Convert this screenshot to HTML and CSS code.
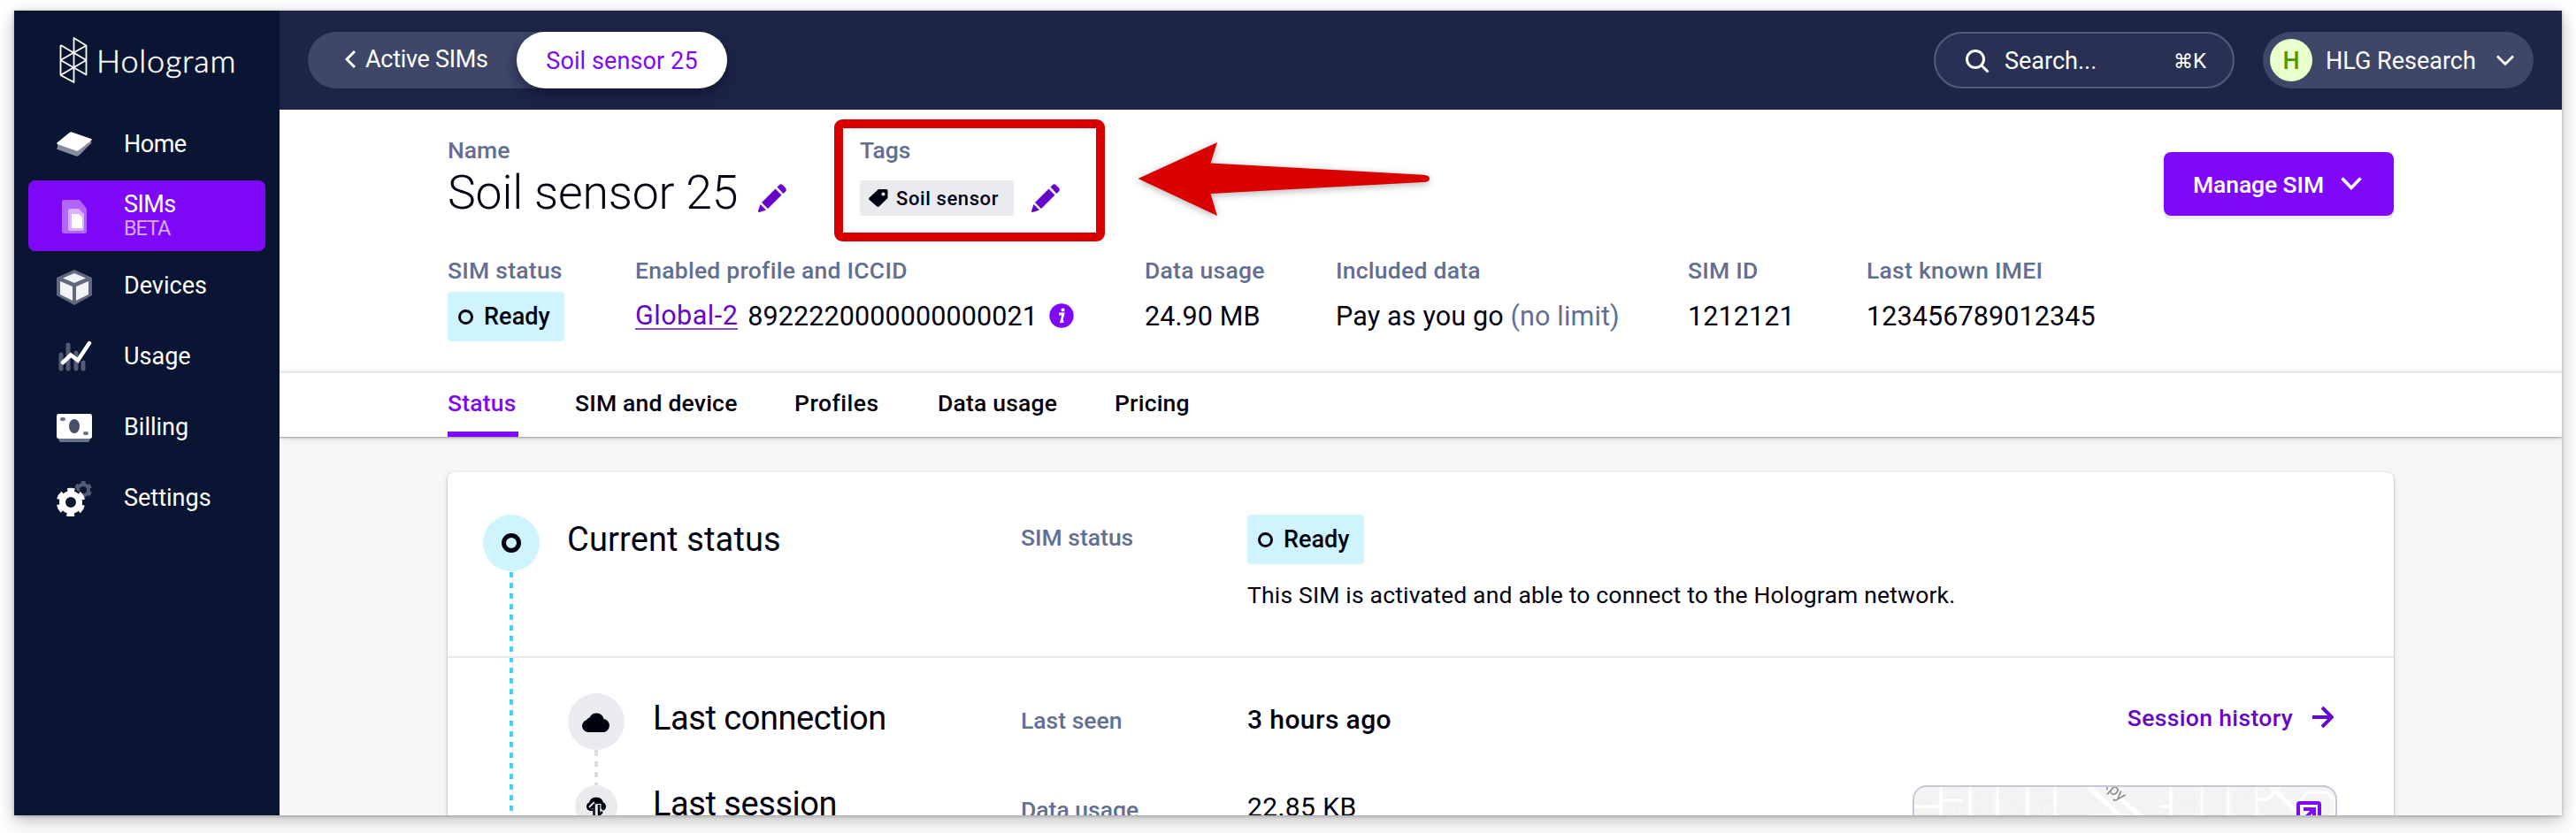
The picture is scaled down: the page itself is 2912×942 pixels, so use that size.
FILE: index.html
```html
<!DOCTYPE html>
<html lang="en">
<head>
    <meta charset="UTF-8">
    <meta name="viewport" content="width=device-width, initial-scale=1.0">
    <title>Soil sensor 25 - Hologram</title>
    <link rel="stylesheet" href="styles.css">
</head>
<body>
    <div class="window">
        <aside class="sidebar">
            <div class="logo">
                <svg width="32" height="54" viewBox="0 0 32 54" fill="none" stroke="#fff" stroke-width="1.8" stroke-linejoin="round">
                    <path d="M1.500 10v34l15 8V2l14 8.500v33L1.500 27l29-16.500M1.500 10l29 17-29 17"/>
                </svg>
                <span class="logo-text">Hologram</span>
            </div>
            <nav class="menu">
                <a class="menu-item">
                    <svg width="40" height="40" viewBox="0 0 40 40">
                        <path d="M1 18l16-11 22 9q1 1 0 2L25 32q-1.500 1-3 .5L1 25q-1.500-1 0-2z" fill="#868c9c"/>
                        <path d="M1 17L14.500 6q1.500-1 3-.5L39 13q1.500 1 0 2L25 26q-1.500 1-3 .5L1 19q-1.500-1 0-2z" fill="#fff"/>
                    </svg>
                    <span class="menu-label home">Home</span>
                </a>
                <a class="menu-item active">
                    <svg width="40" height="40" viewBox="0 0 40 40">
                        <path d="M8 2h18l8 10v26q0 2-2 2H8q-2 0-2-2V4q0-2 2-2z" fill="#b266fb"/>
                        <path d="M15 12h10l6 6v17q0 2-2 2H15q-2 0-2-2V14q0-2 2-2z" fill="#d9b3fd"/>
                        <path d="M17 18h8l4 4v12H17z" fill="#fff"/>
                    </svg>
                    <span class="menu-text">
                        <span class="menu-label sims">SIMs</span>
                        <span class="beta">BETA</span>
                    </span>
                </a>
                <a class="menu-item">
                    <svg class="cube" width="40" height="40" viewBox="0 0 40 40">
                        <path d="M20 0l20 9v20L20 40 0 29V9z" fill="#62697f"/>
                        <path d="M20 4l13 5.500-13 5.500L7 9.500zM4 13l14 6v16L4 28zM36 13l-14 6v16l14-7z" fill="#f3f3f5"/>
                    </svg>
                    <span class="menu-label">Devices</span>
                </a>
                <a class="menu-item">
                    <svg width="40" height="40" viewBox="0 0 40 40" fill="none" stroke-linecap="round">
                        <path d="M5 17v16M13 6v27M22 15v18M30 26v7" stroke="#545b73" stroke-width="5"/>
                        <path d="M7 26l9-8.500 8 6L37 4" stroke="#fff" stroke-width="4.500" stroke-linejoin="miter"/>
                    </svg>
                    <span class="menu-label">Usage</span>
                </a>
                <a class="menu-item">
                    <svg width="40" height="40" viewBox="0 0 40 40">
                        <path d="M2 30h36q0 6-3 6H5q-3 0-3-6z" fill="#6b7186"/>
                        <rect y="4" width="40" height="28" rx="2.500" fill="#fff"/>
                        <ellipse cx="20" cy="18" rx="6" ry="8" fill="#484f68"/>
                        <rect x="4" y="8" width="6" height="4" rx="2" fill="#6b7186"/>
                        <rect x="30" y="24" width="6" height="4" rx="2" fill="#6b7186"/>
                    </svg>
                    <span class="menu-label">Billing</span>
                </a>
                <a class="menu-item">
                    <svg width="40" height="40" viewBox="0 0 40 40" fill="none">
                        <g stroke="#545b73">
                            <circle cx="30" cy="10" r="6" stroke-width="4"/>
                            <circle cx="30" cy="10" r="8.500" stroke-width="3" stroke-dasharray="5 3.900" stroke-dashoffset="2.500" transform="rotate(-90 30 10)"/>
                        </g>
                        <circle cx="16" cy="24" r="15" fill="#0a1533"/>
                        <circle cx="16" cy="24" r="9.500" stroke="#fff" stroke-width="7"/>
                        <circle cx="16" cy="24" r="14" stroke="#fff" stroke-width="4.500" stroke-dasharray="8.500 6.160" stroke-dashoffset="4.250" transform="rotate(-90 16 24)"/>
                    </svg>
                    <span class="menu-label">Settings</span>
                </a>
            </nav>
        </aside>

        <div class="main">
            <header class="topbar">
                <div class="crumbs">
                    <a class="crumb">
                        <svg width="12" height="20" viewBox="0 0 12 20" fill="none" stroke="#fff" stroke-width="3"><path d="M11 1L2 10l9 9"/></svg>
                        Active SIMs
                    </a>
                    <a class="crumb current">Soil sensor 25</a>
                </div>
                <div class="search">
                    <svg width="28" height="28" viewBox="0 0 28 28" fill="none" stroke="#fff" stroke-width="3"><circle cx="12" cy="12" r="9.500"/><path d="M18.500 18.500l8 8"/></svg>
                    <span class="search-text">Search...</span>
                    <span class="shortcut"><span class="cmd">⌘</span>K</span>
                </div>
                <div class="org">
                    <span class="avatar">H</span>
                    <span class="org-name">HLG Research</span>
                    <svg width="20" height="12" viewBox="0 0 20 12" fill="none" stroke="#fff" stroke-width="2.800"><path d="M1 1.500l9 9 9-9"/></svg>
                </div>
            </header>

            <section class="sim-header">
                <div class="identity">
                    <div class="name-group">
                        <div class="label">Name</div>
                        <div class="name-row">
                            <h1>Soil sensor 25</h1>
                            <svg class="pencil" width="32" height="32" viewBox="0 0 32 32"><path d="M21.500 3.500L24 1q2-1.500 4 .5l3 3q1.500 2 0 4l-2.500 2.500zM19.500 5.500l7 7L11 28l-7-7zM2.500 23l6.500 6.500L1.500 32Q0 32 0 30.500z" fill="#6606c8"/></svg>
                        </div>
                    </div>
                    <div class="tags-group">
                        <div class="label">Tags</div>
                        <div class="tag-row">
                            <span class="tag">
                                <svg width="22" height="20" viewBox="0 0 22 20"><path d="M11 0h9q1.500 0 1.500 1.500V10L12 19.300q-1.500 1.200-3 0L.7 12q-1-1.500 0-2.500zM16.500 3.500a2 2 0 1 0 .01 0z" fill="#01020f" fill-rule="evenodd"/></svg>
                                Soil sensor
                            </span>
                            <svg width="32" height="32" viewBox="0 0 32 32"><path d="M21.500 3.500L24 1q2-1.500 4 .5l3 3q1.500 2 0 4l-2.500 2.500zM19.500 5.500l7 7L11 28l-7-7zM2.500 23l6.500 6.500L1.500 32Q0 32 0 30.500z" fill="#6606c8"/></svg>
                        </div>
                        <div class="highlight"></div>
                        <svg class="pointer" width="340" height="92" viewBox="0 0 340 92"><path d="M4.500 45L94 4l-7.500 23.500L327 40.700q7 .5 7 4.300t-7 4L86.500 62 94 87z" fill="#db0000"/></svg>
                    </div>
                    <button class="manage">
                        Manage SIM
                        <svg width="24" height="16" viewBox="0 0 24 16" fill="none" stroke="#fff" stroke-width="3.500"><path d="M1.500 1.500L12 12.500l10.500-11"/></svg>
                    </button>
                </div>
                <div class="facts">
                    <div>
                        <div class="label">SIM status</div>
                        <div class="fact"><span class="badge"><i class="ring"></i>Ready</span></div>
                    </div>
                    <div>
                        <div class="label">Enabled profile and ICCID</div>
                        <div class="fact">
                            <a class="profile">Global-2</a>
                            <span>8922220000000000021</span>
                            <svg class="info" width="28" height="28" viewBox="0 0 28 28"><circle cx="14" cy="14" r="13.700" fill="#7f08f8"/><path d="M11 12h5l-2.200 8.500h2.500" fill="none" stroke="#fff" stroke-width="2.800"/><circle cx="15.500" cy="7.500" r="2" fill="#fff"/></svg>
                        </div>
                    </div>
                    <div>
                        <div class="label">Data usage</div>
                        <div class="fact">24.90 MB</div>
                    </div>
                    <div>
                        <div class="label">Included data</div>
                        <div class="fact plan">Pay as you go <span class="muted">(no limit)</span></div>
                    </div>
                    <div>
                        <div class="label">SIM ID</div>
                        <div class="fact">1212121</div>
                    </div>
                    <div>
                        <div class="label">Last known IMEI</div>
                        <div class="fact">123456789012345</div>
                    </div>
                </div>
            </section>

            <nav class="tabs">
                <a class="tab tab-status">Status</a>
                <a class="tab tab-device">SIM and device</a>
                <a class="tab tab-profiles">Profiles</a>
                <a class="tab tab-usage">Data usage</a>
                <a class="tab">Pricing</a>
            </nav>

            <section class="content">
                <div class="card">
                    <div class="status-row">
                        <div class="rail">
                            <span class="dot dot-ready"><i class="ring"></i></span>
                            <span class="dashes"></span>
                        </div>
                        <h2>Current status</h2>
                        <div class="label">SIM status</div>
                        <div>
                            <span class="badge"><i class="ring"></i>Ready</span>
                            <p>This SIM is activated and able to connect to the Hologram network.</p>
                        </div>
                    </div>
                    <div class="history-row">
                        <div class="rail"><span class="dashes offset"></span></div>
                        <div class="subrail">
                            <span class="dot">
                                <svg width="32" height="24" viewBox="0 0 32 24"><path d="M7 24a7 7 0 0 1-2-13.700 6 6 0 0 1 3.500-2.800 8.500 8.500 0 0 1 16 1.500A7.600 7.600 0 0 1 24.500 24z" fill="#01020f"/></svg>
                            </span>
                            <span class="dashes grey"></span>
                            <span class="dot small">
                                <svg width="24" height="24" viewBox="0 0 24 24"><path d="M5 17a5 5 0 0 1-1-9.500 8.300 8.300 0 0 1 16 0A5 5 0 0 1 19 17z" fill="#01020f"/><path d="M5 14l4-4 2 2V24M19 16l-4 4V9" fill="none" stroke="#eaebef" stroke-width="5"/><path d="M5.500 14.500L9.500 10.500V24M19 18l-4 4V10" fill="none" stroke="#01020f" stroke-width="2.500"/></svg>
                            </span>
                        </div>
                        <div class="events">
                            <div class="event">
                                <h2>Last connection</h2>
                                <div class="label">Last seen</div>
                                <div class="seen">3 hours ago</div>
                                <a class="history-link">
                                    Session history
                                    <svg width="24" height="24" viewBox="0 0 24 24" fill="none" stroke="#6606c8" stroke-width="4"><path d="M0 12h22M11 1l11 11-11 11"/></svg>
                                </a>
                            </div>
                            <div class="event session">
                                <h2>Last session</h2>
                                <div class="label">Data usage</div>
                                <div class="amount">22.85 KB</div>
                                <div class="map">
                                    <svg width="476" height="120" viewBox="0 0 476 120">
                                        <g fill="none" stroke="#eeeeef" stroke-width="1">
                                            <path d="M6 6h14v12H6zM36 2h16v10H36zM36 20h12v10H36zM70 8h15v20H70zM100 5h16v9h-16zM108 18h14v10h-14zM135 4h18v10h-18zM144 16h12v14h-12zM170 24h20v10h-20zM296 6h20v9h-20zM298 20h18v12h-18zM334 6h16v20h-16zM362 8h16v18h-16z"/>
                                        </g>
                                        <path d="M190 38Q196 24 240 30l30 8z" fill="#f4f7f8"/>
                                        <g fill="none" stroke="#fff" stroke-width="3">
                                            <path d="M30 0v120M63 0v120M94 0v120M128 0v120M159 0v120M290 0v120M325 0v120M355 0v120M387 0v120M0 22h30M30 15h24M278 22h12M387 14h12l14-14M476 36V15l-10-9h-22l-8 10"/>
                                            <path d="M194-4l46 44M212-4l52 44M402-2l34 34" stroke-width="5"/>
                                        </g>
                                        <text x="204" y="-9" transform="rotate(42 204 -9)" class="road">Expy</text>
                                        <g fill="none" stroke="#7f08f8" stroke-width="4"><rect x="434" y="18" width="24" height="24" rx="1.500" fill="#fff"/><path d="M440 25h12v12M452 25L440 37"/></g>
                                    </svg>
                                </div>
                            </div>
                        </div>
                    </div>
                </div>
            </section>
        </div>
    </div>
</body>
</html>
```
FILE: styles.css
```css
* {
    box-sizing: border-box;
}

body {
    margin: 0;
    padding: 12px 16px 20px;
    height: 942px;
    overflow: hidden;
    background-color: #fff;
    color: #01020f;
    font-family: Roboto, "Liberation Sans", sans-serif;
    font-size: 27px;
}

svg {
    flex: none;
    display: block;
}

h1, h2, p {
    margin: 0;
}

.window {
    display: flex;
    width: 2880px;
    height: 910px;
    box-shadow: 0 6px 20px rgba(0, 0, 0, 0.25), 0 1px 4px rgba(0, 0, 0, 0.25);
}

/* sidebar */
.sidebar {
    flex: none;
    width: 300px;
    background-color: #0a1533;
    color: #fff;
}

.logo {
    display: flex;
    align-items: center;
    gap: 10px;
    height: 112px;
    padding-left: 51px;
}

.logo-text {
    font-family: Lato, sans-serif;
    font-weight: 300;
    font-size: 36px;
    line-height: 50px;
    letter-spacing: 0.8px;
    -webkit-text-stroke: 0.5px #fff;
}

.menu-item {
    display: flex;
    align-items: center;
    gap: 36px;
    height: 80px;
    margin: 0 16px;
    padding-left: 32px;
    border-radius: 8px;
}

.menu-item.active {
    background-color: #7f08f8;
}

.menu-text {
    display: flex;
    flex-direction: column;
}

.menu-label {
    margin-bottom: 2px;
    line-height: 30px;
}

.home {
    letter-spacing: -0.5px;
}

.sims {
    margin-bottom: 0;
    letter-spacing: -0.6px;
}

.beta {
    margin-bottom: 2px;
    color: #d4a9fd;
    font-size: 23.5px;
    line-height: 25px;
    letter-spacing: -1.1px;
}

.cube {
    margin-top: 2px;
}

/* topbar */
.main {
    flex: 1;
    min-width: 0;
    display: flex;
    flex-direction: column;
    overflow: hidden;
    background-color: #f7f7fa;
}

.topbar {
    flex: none;
    display: flex;
    align-items: center;
    height: 112px;
    padding: 0 32px;
    background-color: #1d2546;
    color: #fff;
}

.crumbs {
    display: flex;
    height: 64px;
    margin-right: auto;
    border-radius: 32px;
    background-color: #3e4767;
}

.crumb {
    display: flex;
    align-items: center;
    gap: 11px;
    width: 236px;
    padding: 0 0 2px 42px;
    letter-spacing: -0.3px;
}

.crumb.current {
    justify-content: center;
    width: 238px;
    padding: 2px 0 0;
    border-radius: 32px;
    background-color: #fff;
    color: #7f08f8;
    letter-spacing: 0.1px;
    box-shadow: 0 8px 16px rgba(10, 12, 40, 0.5);
}

.search {
    display: flex;
    align-items: center;
    width: 340px;
    height: 64px;
    margin-right: 32px;
    padding: 2px 30px 0 33px;
    border: 2px solid #535c7b;
    border-radius: 32px;
    background-color: #283154;
}

.search-text {
    margin-left: 17px;
}

.shortcut {
    display: flex;
    align-items: center;
    margin-left: auto;
    font-size: 24px;
}

.cmd {
    font-family: "DejaVu Sans", sans-serif;
    font-size: 22px;
}

.org {
    display: flex;
    align-items: center;
    width: 306px;
    height: 64px;
    padding: 0 22px 0 8px;
    border-radius: 32px;
    background-color: #3e4767;
}

.avatar {
    width: 48px;
    height: 48px;
    border-radius: 50%;
    background-color: #e9ffcc;
    color: #469907;
    font-weight: 500;
    line-height: 50px;
    text-align: center;
}

.org-name {
    margin: 2px auto 0 15px;
}

/* sim header */
.sim-header {
    flex: none;
    height: 296px;
    padding: 31px 190px 0;
    background-color: #fff;
}

.label {
    color: #636e93;
    font-size: 26.5px;
    font-weight: 500;
    line-height: 30px;
    white-space: nowrap;
}

.identity {
    display: flex;
    height: 136px;
}

.name-group {
    width: 466px;
}

.name-row {
    display: flex;
    align-items: center;
    gap: 23px;
    height: 66px;
}

h1 {
    font-size: 53.5px;
    font-weight: 300;
    line-height: 66px;
    letter-spacing: -0.15px;
    white-space: nowrap;
}

.pencil {
    margin-top: 12px;
}

.tags-group {
    position: relative;
}

.tag-row {
    display: flex;
    align-items: center;
    gap: 20px;
    margin-top: 19px;
}

.tag {
    display: flex;
    align-items: center;
    gap: 9px;
    width: 174px;
    height: 40px;
    padding-left: 10px;
    border-radius: 3px;
    background-color: #eaebef;
    font-size: 22px;
    font-weight: 500;
    letter-spacing: 0.6px;
    white-space: nowrap;
}

/* red frame and arrow drawn over the tags */
.highlight {
    position: absolute;
    top: -20px;
    left: -29px;
    width: 306px;
    height: 138px;
    border: 10px solid #db0000;
    border-radius: 9px;
}

.pointer {
    position: absolute;
    top: 2px;
    left: 310px;
    filter: drop-shadow(0 2px 4px rgba(0, 0, 0, 0.3));
}

.manage {
    display: flex;
    align-items: center;
    justify-content: space-between;
    width: 260px;
    height: 72px;
    margin: 17px 0 0 auto;
    padding: 0 36px 0 33px;
    border: none;
    border-radius: 8px;
    background-color: #7f08f8;
    color: #fff;
    font-family: inherit;
    font-size: 26.5px;
    font-weight: 500;
    letter-spacing: -0.1px;
    box-shadow: 0 4px 0 #ebebee;
}

.facts {
    display: grid;
    grid-template-columns: 212px 576px 216px 398px 202px 1fr;
}

.facts .label {
    letter-spacing: 0.25px;
}

.fact {
    display: flex;
    align-items: center;
    height: 56px;
    margin-top: 9px;
    padding-bottom: 2px;
    font-size: 30.5px;
    letter-spacing: 0.1px;
    white-space: pre;
}

.badge {
    display: flex;
    align-items: center;
    flex: none;
    width: 132px;
    height: 56px;
    padding-left: 12px;
    border-radius: 4px;
    background-color: #cff4fd;
    font-size: 27px;
    font-weight: 500;
}

.fact .badge {
    margin-top: 2px;
}

.ring {
    width: 17px;
    height: 17px;
    margin-right: 12px;
    border: 3.5px solid #01020f;
    border-radius: 50%;
}

.profile {
    margin-right: 11px;
    padding-top: 2px;
    border-bottom: 2px solid #8b46d6;
    color: #6606c8;
    line-height: 28px;
    letter-spacing: 0.5px;
}

.info {
    margin-left: 13px;
}

.plan {
    letter-spacing: 0.15px;
}

.muted {
    color: #636e93;
}

/* tabs */
.tabs {
    flex: none;
    position: relative;
    display: flex;
    gap: 64px;
    height: 74px;
    padding-left: 190px;
    border-top: 2px solid #e3e8ee;
    background-color: #fff;
    box-shadow: 0 1px 2px rgba(0, 0, 0, 0.35), 0 2px 10px rgba(0, 0, 0, 0.1);
}

.tab {
    font-size: 26.5px;
    font-weight: 500;
    line-height: 67px;
    letter-spacing: 0.2px;
    white-space: nowrap;
}

.tab-status {
    width: 80px;
    border-bottom: 6px solid #7f08f8;
    color: #7f08f8;
}

.tab-device {
    width: 184px;
}

.tab-profiles {
    width: 98px;
    letter-spacing: 0.5px;
}

.tab-usage {
    width: 136px;
}

/* timeline card */
.content {
    padding: 40px 190px 0;
}

.card {
    height: 600px;
    border-radius: 8px;
    background-color: #fff;
    box-shadow: 0 1px 3px rgba(0, 0, 0, 0.3), 0 2px 8px rgba(0, 0, 0, 0.08);
}

h2 {
    margin-left: -2px;
    font-size: 38px;
    font-weight: 400;
    line-height: 56px;
    white-space: nowrap;
}

.status-row {
    display: grid;
    grid-template-columns: 97px 511px 256px 1fr;
    height: 210px;
    padding-left: 40px;
    border-bottom: 2px solid #e3e8ee;
}

.status-row h2 {
    padding-top: 48px;
    letter-spacing: 0.15px;
}

.status-row .label {
    padding-top: 59px;
}

.status-row .badge {
    margin-top: 48px;
}

.status-row p {
    margin-top: 18px;
    font-size: 26.5px;
    line-height: 34px;
    letter-spacing: 0.18px;
}

.rail,
.subrail {
    display: flex;
    flex-direction: column;
    align-items: center;
    width: 64px;
}

.status-row .rail {
    padding-top: 48px;
}

.dot {
    flex: none;
    display: flex;
    align-items: center;
    justify-content: center;
    width: 64px;
    height: 64px;
    border-radius: 50%;
    background-color: #eaebef;
}

.dot.small {
    width: 48px;
    height: 48px;
}

.dot-ready {
    background-color: #cff4fd;
}

.dot-ready .ring {
    width: 22px;
    height: 22px;
    margin: 0;
    border-width: 5px;
}

.dashes {
    flex: 1;
    width: 4px;
    background-image: repeating-linear-gradient(#3cd6f5 0 6px, transparent 6px 12px);
    background-position: 0 1px;
}

.dashes.offset {
    background-image: repeating-linear-gradient(#3cd6f5 0 5px, transparent 5px 11px, #3cd6f5 11px 12px);
    background-position: 0 0;
}

.dashes.grey {
    flex: none;
    height: 40px;
    background-image: repeating-linear-gradient(#dcdde3 0 6px, transparent 6px 12px);
}

.history-row {
    display: flex;
    height: 390px;
    padding-left: 40px;
}

.subrail {
    margin: 40px 34px 0 32px;
}

.events {
    flex: 1;
    padding-top: 40px;
}

.event {
    display: grid;
    grid-template-columns: 414px 256px 1fr 480px;
    height: 104px;
    padding-right: 64px;
}

.event h2 {
    letter-spacing: -0.45px;
}

.event .label {
    line-height: 61px;
}

.seen,
.amount {
    font-size: 30px;
    line-height: 59px;
    letter-spacing: 0.4px;
}

.seen {
    font-weight: 500;
}

.history-link {
    display: flex;
    align-items: center;
    justify-content: flex-end;
    gap: 22px;
    height: 54px;
    padding-right: 4px;
    color: #6606c8;
    font-size: 26.5px;
    font-weight: 500;
    letter-spacing: 0.35px;
}

.session h2 {
    line-height: 43px;
}

.session .label {
    line-height: 55px;
}

.session .amount {
    line-height: 50px;
}

.map {
    height: 240px;
    overflow: hidden;
    border: 2px solid #c5c8d9;
    border-radius: 16px;
    background-color: #f4f4f5;
}

.road {
    fill: #8d8d8d;
    font-size: 18.5px;
}
```
